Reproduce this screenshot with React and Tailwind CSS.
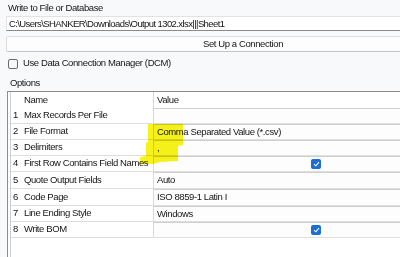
import React from 'react';

const rows = [
    { n: 1, name: 'Max Records Per File', value: '', h: 'h-[16px]' },
    { n: 2, name: 'File Format', value: 'Comma Separated Value (*.csv)', h: 'h-[16px]' },
    { n: 3, name: 'Delimiters', value: ',', h: 'h-[16px]' },
    { n: 4, name: 'First Row Contains Field Names', check: true, h: 'h-[16px]' },
    { n: 5, name: 'Quote Output Fields', value: 'Auto', h: 'h-[17px]' },
    { n: 6, name: 'Code Page', value: 'ISO 8859-1 Latin I', h: 'h-[17px]' },
    { n: 7, name: 'Line Ending Style', value: 'Windows', h: 'h-[16px]' },
    { n: 8, name: 'Write BOM', check: true, h: 'h-[16px]' },
];

const Check = () => (
    <span className="w-[10px] h-[10px] rounded-[2px] bg-[#1c6fd1] flex items-center justify-center">
        <svg width="7" height="6" viewBox="0 0 7 6">
            <path d="M1 3.2 L2.8 4.8 L6 1.2" fill="none" stroke="white" strokeWidth="1.1" />
        </svg>
    </span>
);

const App = () => {
    return (
        <div className="relative w-[400px] h-[257px] overflow-hidden bg-[#f8f9fb] text-[#151515] text-[9.5px] tracking-[-0.4px] font-['Liberation_Sans',Arial,sans-serif]">
            <div className="w-[480px]">
                <div className="pl-2 pt-[2px] h-[16px] leading-[11px]">Write to File or Database</div>

                {/* path box */}
                <div className="ml-[6px] h-[15px] bg-white border border-[#e2e2e2] border-b-[#8a8a8a] pl-[2px] leading-[13px] tracking-[-0.6px]">
                    C:\Users\SHANKER\Downloads\Output 1302.xlsx|||Sheet1
                </div>

                {/* button */}
                <div className="ml-[6px] mt-[5px] h-[16px] bg-[#fdfdfd] border border-[#dcdcdc] border-b-[#c4c4c4] rounded-[2px] flex items-center justify-center leading-[14px]">
                    Set Up a Connection
                </div>

                <div className="flex items-center gap-[5px] pl-[8px] mt-[5px] h-[13px]">
                    <span className="w-[10px] h-[10px] border border-[#6b6b6b] rounded-[2px] bg-[#f6f6f6]"></span>
                    <span>Use Data Connection Manager (DCM)</span>
                </div>

                <div className="pl-[10px] mt-[8px] h-[10px] leading-[10px]">Options</div>

                {/* grid */}
                <div className="mt-[3px] ml-[7px] h-[200px] border-l border-t border-[#8c8c8c] bg-white">
                    <div className="ml-[2px] border-l border-[#d0d0d0] h-full">
                        <div className="flex h-[16px] items-center">
                            <div className="w-[12px]"></div>
                            <div className="w-[130px] pl-[1px]">Name</div>
                            <div className="pl-[3px] h-full border-l border-[#d8d8d8] flex items-center">Value</div>
                        </div>
                        {rows.map((r) => (
                            <div key={r.n} className={`flex ${r.h} border-b border-[#dedede]`}>
                                <div className="w-[12px] pl-[2px] flex items-center">{r.n}</div>
                                <div className="w-[130px] pl-[1px] flex items-center">{r.name}</div>
                                <div className="flex-1 border-l border-[#d8d8d8] border-t border-t-[#cfcfcf] bg-[#fdfdfd] pl-[3px] flex items-center">
                                    {r.check ? (
                                        <div className="w-[318px] flex justify-center"><Check /></div>
                                    ) : (
                                        r.value
                                    )}
                                </div>
                            </div>
                        ))}
                    </div>
                </div>
            </div>

            {/* highlighter marks */}
            <svg className="absolute left-0 top-0 pointer-events-none mix-blend-multiply" width="400" height="257">
                <path
                    d="M148 124 L183 124 L183 145 L178 146 L178 161 L160 162 L153 164 L140 164 L140 157 L146 156 L146 143 L148 142 Z"
                    fill="#f7f21a"
                />
            </svg>
        </div>
    );
};

export default App;
